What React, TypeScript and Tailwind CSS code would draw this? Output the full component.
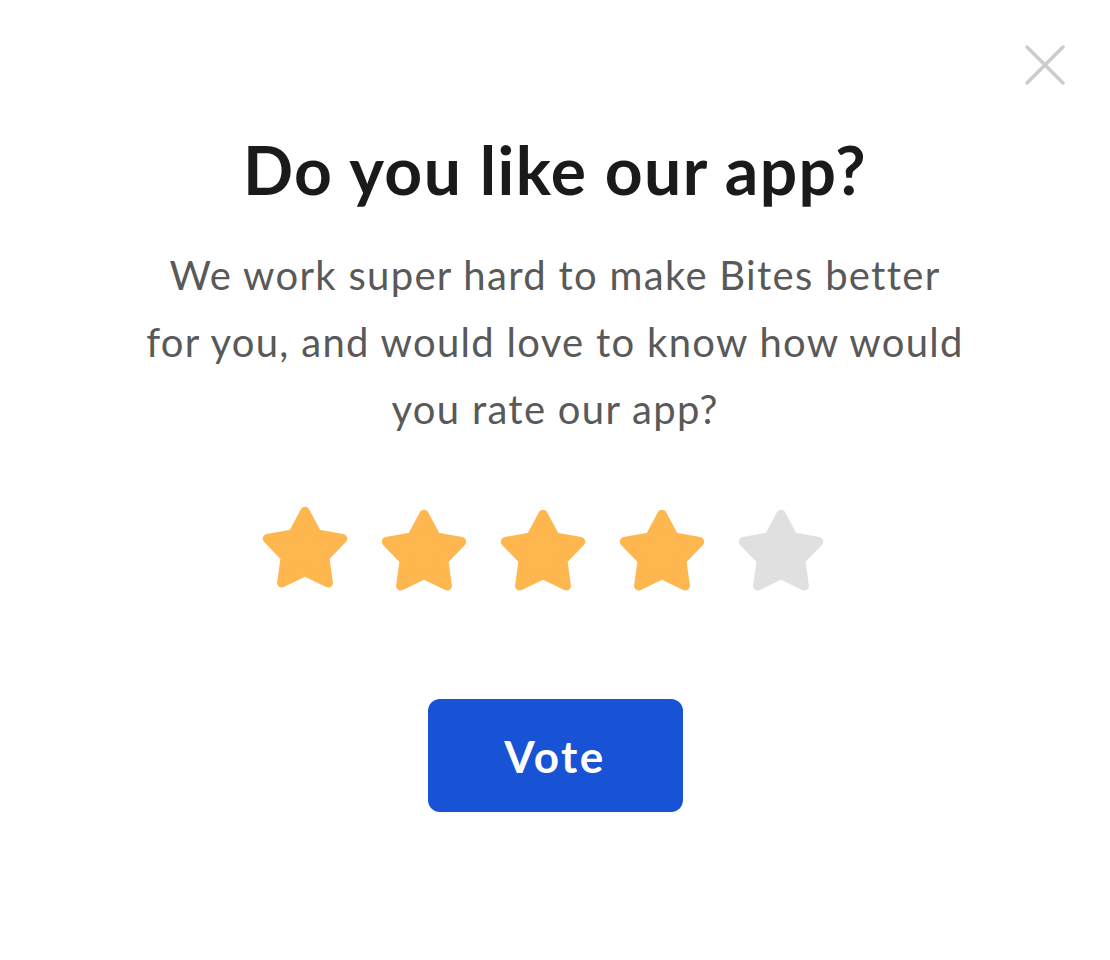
import React, { useState } from 'react';

const Star = ({ filled, lifted }: { filled: boolean; lifted?: boolean }) => (
  <svg
    width="94"
    height="94"
    viewBox="0 0 100 100"
    className={lifted ? '-translate-y-[3px]' : ''}
  >
    <polygon
      points="50,10 62.9,34.2 89.9,39 70.9,58.8 74.7,86 50,74 25.3,86 29.1,58.8 10.1,39 37.1,34.2"
      fill={filled ? '#FDB74E' : '#E0E0E0'}
      stroke={filled ? '#FDB74E' : '#E0E0E0'}
      strokeWidth="10"
      strokeLinejoin="round"
    />
  </svg>
);

export default function App() {
  const [rating, setRating] = useState(4);

  return (
    <div className="relative w-[1110px] h-[960px] bg-white font-['Lato','Noto_Sans',sans-serif]">
      {/* close */}
      <button className="absolute top-[44px] right-[44px] w-[42px] h-[42px] flex items-center justify-center">
        <svg width="42" height="42" viewBox="0 0 42 42">
          <path d="M3 3 L39 39 M39 3 L3 39" stroke="#CCCCCC" strokeWidth="3.5" strokeLinecap="round" />
        </svg>
      </button>

      <div className="flex flex-col items-center pt-[130px]">
        <h1 className="text-[66px] leading-[80px] font-bold text-[#1a1a1a] tracking-[1.4px]">
          Do you like our app?
        </h1>

        <p className="mt-[32px] text-center text-[40px] leading-[67px] text-[#595959] tracking-[1.3px]">
          We work super hard to make Bites better
          <br />
          for you, and would love to know how would
          <br />
          you rate our app?
        </p>

        <div className="mt-[62px] mr-[24px] flex items-center gap-[25px]">
          {[1, 2, 3, 4, 5].map((i) => (
            <button key={i} onClick={() => setRating(i)} className="block">
              <Star filled={i <= rating} lifted={i === 1} />
            </button>
          ))}
        </div>

        <button className="mt-[100px] w-[255px] h-[113px] rounded-[12px] bg-[#1853D6] text-white text-[44px] font-bold tracking-[2.5px]">
          Vote
        </button>
      </div>
    </div>
  );
}
